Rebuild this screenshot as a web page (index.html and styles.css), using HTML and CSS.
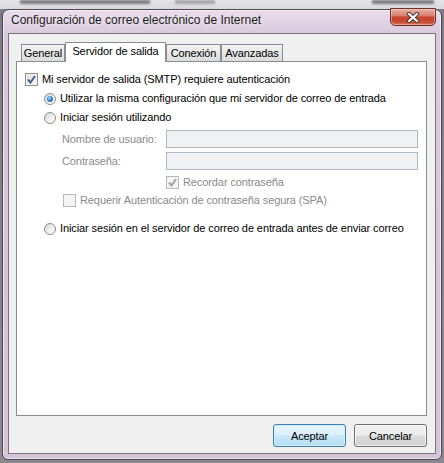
FILE: index.html
```html
<!DOCTYPE html>
<html lang="es">
<head>
<meta charset="utf-8">
<title>Configuración de correo electrónico de Internet</title>
<link rel="stylesheet" href="styles.css">
</head>
<body>
<div class="desk">
  <div class="behind behind-left"></div>
  <div class="behind behind-mid"></div>
  <div class="behind behind-right"></div>
  <div class="window">
    <div class="titlebar">
      <span class="title">Configuración de correo electrónico de Internet</span>
      <button class="close" aria-label="Cerrar">
        <svg width="14" height="11" viewBox="0 0 14 11">
          <path d="M3 2 L11 9 M11 2 L3 9" stroke="#4a3a38" stroke-width="4.2" stroke-linecap="round" fill="none"/>
          <path d="M3 2 L11 9 M11 2 L3 9" stroke="#ffffff" stroke-width="2.2" stroke-linecap="round" fill="none"/>
        </svg>
      </button>
    </div>
    <div class="client">
      <div class="tabs">
        <div class="tab t-general">General</div>
        <div class="tab active t-out">Servidor de salida</div>
        <div class="tab t-conn">Conexión</div>
        <div class="tab t-adv">Avanzadas</div>
      </div>
      <div class="panel">
        <div class="row r-main">
          <span class="cb"><svg width="9" height="9" viewBox="0 0 9 9"><path d="M1 4.5 L3.5 7.5 L8 1" stroke="#4b5e8c" stroke-width="2" fill="none"/></svg></span>
          <span class="txt">Mi servidor de salida (SMTP) requiere autenticación</span>
        </div>
        <div class="row r-opt">
          <span class="rb on"></span>
          <span class="txt">Utilizar la misma configuración que mi servidor de correo de entrada</span>
        </div>
        <div class="row r-opt">
          <span class="rb"></span>
          <span class="txt">Iniciar sesión utilizando</span>
        </div>
        <div class="field f1">
          <span class="lbl">Nombre de usuario:</span>
          <span class="inp"></span>
        </div>
        <div class="field f2">
          <span class="lbl">Contraseña:</span>
          <span class="inp"></span>
        </div>
        <div class="row r-rem">
          <span class="cb dis"><svg width="9" height="9" viewBox="0 0 9 9"><path d="M1 4.5 L3.5 7.5 L8 1" stroke="#a3a3a3" stroke-width="2" fill="none"/></svg></span>
          <span class="txt dtxt">Recordar contraseña</span>
        </div>
        <div class="row r-spa">
          <span class="cb dis"></span>
          <span class="txt dtxt">Requerir Autenticación de contraseña segura (SPA)</span>
        </div>
        <div class="row r-opt r-last">
          <span class="rb"></span>
          <span class="txt">Iniciar sesión en el servidor de correo de entrada antes de enviar correo</span>
        </div>
      </div>
      <div class="buttons">
        <button class="btn default">Aceptar</button>
        <button class="btn">Cancelar</button>
      </div>
    </div>
  </div>
</div>
</body>
</html>
```
FILE: styles.css
```css
html, body {
  margin: 0;
  padding: 0;
}
body {
  width: 444px;
  height: 463px;
  overflow: hidden;
  background: #8a868c;
  font-family: "Liberation Sans", Arial, sans-serif;
  font-size: 11px;
  letter-spacing: -0.1px;
  color: #000;
}
.desk {
  position: relative;
  height: 463px;
  box-sizing: border-box;
  padding: 9px 2px 3px 2px;
  background: linear-gradient(#e4e3e5 0, #d9d8da 9px, #7f7b82 9px, #8c8890 100%);
}
.behind {
  position: absolute;
  top: 0;
  height: 4px;
  background: #3a3a3a;
  opacity: 0.6;
  filter: blur(1px);
}
.behind-left { left: 20px; width: 130px; }
.behind-mid { left: 175px; width: 40px; opacity: 0.35; }
.behind-right { left: 372px; width: 62px; }

.window {
  position: relative;
  z-index: 1;
  height: 451px;
  box-sizing: border-box;
  border: 1px solid #4e4852;
  border-radius: 7px 7px 6px 6px;
  background: linear-gradient(#e8dcea 0, #d9c9dd 24px, #d5c3d9 100%);
  box-shadow: inset 0 0 0 1px rgba(255, 255, 255, 0.55);
  padding: 0 5px 5px 5px;
  display: flex;
  flex-direction: column;
}
.titlebar {
  height: 23px;
  display: flex;
  align-items: flex-start;
}
.title {
  margin-top: 3px;
  padding-left: 3px;
  font-size: 12px;
  line-height: 14px;
  letter-spacing: 0;
  color: #1c1c1c;
  text-shadow: 0 0 6px rgba(255, 255, 255, 0.9);
}
.close {
  margin-left: auto;
  margin-top: -2px;
  width: 46px;
  height: 18px;
  padding: 0;
  border: 1px solid #6b3029;
  border-radius: 0 0 5px 5px;
  background: linear-gradient(#eab1a4 0%, #d9826f 40%, #c5452f 52%, #c84b33 80%, #d9745c 100%);
  box-shadow: inset 0 0 0 1px rgba(255, 220, 210, 0.45);
  display: flex;
  align-items: center;
  justify-content: center;
}
.close svg { display: block; }

.client {
  flex: 1;
  border: 1px solid #7a7480;
  background: #f0f0f0;
  padding: 8px 8px 6px 7px;
  display: flex;
  flex-direction: column;
}
.tabs {
  height: 19px;
  display: flex;
  align-items: flex-end;
  padding-left: 5px;
}
.tab {
  height: 17px;
  box-sizing: border-box;
  border: 1px solid #898c95;
  border-bottom: none;
  background: linear-gradient(#f3f3f3, #e8e8e8 50%, #dcdcdc);
  text-align: center;
  line-height: 16px;
  white-space: nowrap;
}
.t-general { width: 44px; }
.t-out { width: 101px; }
.t-conn { width: 55px; }
.t-adv { width: 62px; }
.tab.active {
  position: relative;
  z-index: 1;
  height: 20px;
  margin-bottom: -1px;
  background: #fff;
  line-height: 17px;
}

.panel {
  flex: 1;
  border: 1px solid #898c95;
  background: #fff;
  padding-top: 8px;
  display: flex;
  flex-direction: column;
}
.row {
  height: 19px;
  display: flex;
  align-items: center;
  white-space: nowrap;
}
.r-main { padding-left: 8px; }
.r-opt { padding-left: 26px; }
.r-rem { height: 18px; margin-top: 3px; padding-left: 149px; }
.r-spa { height: 18px; padding-left: 46px; }
.r-last { margin-top: 10px; }

.cb {
  width: 13px;
  height: 13px;
  box-sizing: border-box;
  border: 1px solid #8e8f8f;
  background: linear-gradient(135deg, #dcdcdc, #fbfbfb);
  box-shadow: inset 0 0 0 1px #f4f4f4;
  margin-right: 4px;
  display: flex;
  align-items: center;
  justify-content: center;
  flex: none;
}
.cb svg { display: block; }
.cb.dis {
  border-color: #b8b8b8;
  background: #f4f4f4;
  box-shadow: none;
}
.rb {
  width: 12px;
  height: 12px;
  box-sizing: border-box;
  border-radius: 50%;
  border: 1px solid #8b8c8c;
  background: linear-gradient(135deg, #d5d5d5, #f7f7f7 70%, #ffffff);
  margin-left: 1px;
  margin-right: 4px;
  display: flex;
  align-items: center;
  justify-content: center;
  flex: none;
}
.rb.on::after {
  content: "";
  width: 6px;
  height: 6px;
  border-radius: 50%;
  background: radial-gradient(circle at 40% 35%, #a9e2ff 0%, #3a86cf 45%, #154a8e 100%);
}
.txt { line-height: 13px; }
.dtxt { color: #8a8a8a; }

.field {
  height: 18px;
  display: flex;
  align-items: center;
  padding-left: 45px;
  color: #8a8a8a;
}
.f1 { margin-top: 3px; }
.f2 { margin-top: 4px; }
.lbl { width: 104px; flex: none; }
.inp {
  width: 252px;
  height: 18px;
  box-sizing: border-box;
  border: 1px solid #adb8c2;
  background: #f0f1f3;
}

.buttons {
  display: flex;
  justify-content: flex-end;
  gap: 8px;
  margin-top: 8px;
}
.btn {
  width: 73px;
  height: 23px;
  padding: 0;
  border: 1px solid #707070;
  border-radius: 3px;
  background: linear-gradient(#f2f2f2 0%, #ebebeb 48%, #dddddd 52%, #cfcfcf 100%);
  box-shadow: inset 0 0 0 1px rgba(255, 255, 255, 0.75);
  font-family: "Liberation Sans", Arial, sans-serif;
  font-size: 11px;
  letter-spacing: -0.1px;
  color: #000;
}
.btn.default {
  border-color: #3c7fb1;
  background: linear-gradient(#e8f5fc 0%, #dbeffb 48%, #c9e7f8 52%, #b5dcf3 100%);
  box-shadow: inset 0 0 0 1px rgba(210, 240, 255, 0.9);
}
```
